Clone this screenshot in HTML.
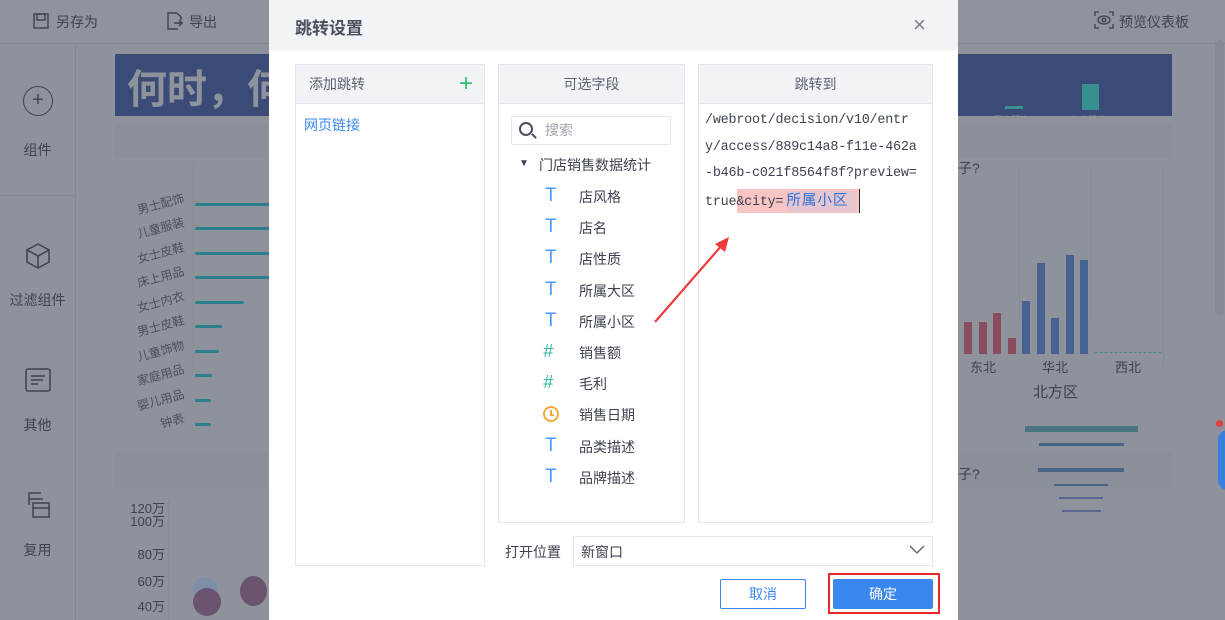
<!DOCTYPE html>
<html><head><meta charset="utf-8"><style>
*{margin:0;padding:0;box-sizing:border-box}
body{width:1225px;height:620px;overflow:hidden;background:#8e929b;font-family:"Liberation Sans","Noto Sans CJK SC",sans-serif;position:relative;color:#3c4250}
.a{position:absolute}
.bgt{color:#3e4350;font-size:14px}
.side{color:#3e4350;font-size:14px;width:75px;text-align:center}
.blbl{font-size:12px;color:#4a4f5c;text-align:right;width:70px;transform:rotate(-15deg)}
.bar{height:3px;background:#2b7f8c;border-radius:2px}
.dlg{left:269px;top:0;width:689px;height:620px;background:#fff}
.panel{border:1px solid #e3e6eb;background:#fff}
.ph{height:39px;background:#f1f3f6;border-bottom:1px solid #e3e6eb;font-size:14px;color:#5c6270;line-height:39px}
.T{left:46px;color:#4a9aff;font-size:19px;font-family:"Liberation Sans",sans-serif}
.H{left:44px;color:#2fb8a2;font-size:18px;font-style:italic}
.url{font-family:"Liberation Mono","DejaVu Sans Mono",monospace;font-size:13.4px;color:#3c4250;line-height:26.5px;letter-spacing:-0.2px}
</style></head><body>
<!-- background app -->
<div class="a" style="left:0;top:0;width:1225px;height:44px;background:#8f939c;border-bottom:1px solid #80858f"></div>
<svg class="a" style="left:32px;top:12px" width="18" height="18"><rect x="2" y="2" width="14" height="14" fill="none" stroke="#3e4350" stroke-width="1.4"/><rect x="5" y="2" width="8" height="6" fill="none" stroke="#3e4350" stroke-width="1.4"/></svg>
<div class="a bgt" style="left:56px;top:12px">另存为</div>
<svg class="a" style="left:165px;top:11px" width="18" height="20"><path d="M12 2H3v16h10M12 2l4 4v3M9 12h8M14 9l3 3-3 3" fill="none" stroke="#3e4350" stroke-width="1.4"/></svg>
<div class="a bgt" style="left:189px;top:12px">导出</div>
<svg class="a" style="left:1094px;top:11px" width="20" height="18"><path d="M1 5V1h4M15 1h4v4M19 13v4h-4M5 17H1v-4" fill="none" stroke="#3e4350" stroke-width="1.3"/><ellipse cx="10" cy="9" rx="6" ry="4" fill="none" stroke="#3e4350" stroke-width="1.3"/><circle cx="10" cy="9" r="1.8" fill="none" stroke="#3e4350" stroke-width="1.3"/></svg>
<div class="a bgt" style="left:1119px;top:12px">预览仪表板</div>
<div class="a" style="left:75px;top:44px;width:1px;height:576px;background:#828791"></div>
<div class="a" style="left:0;top:195px;width:75px;height:1px;background:#828791"></div>
<div class="a" style="left:23px;top:86px;width:30px;height:30px;border:1.5px solid #3e4350;border-radius:50%;text-align:center;line-height:26px;font-size:20px;color:#3e4350">+</div>
<div class="a side" style="left:0;top:140px">组件</div>
<svg class="a" style="left:24px;top:242px" width="28" height="28"><path d="M14 2L25 8v12L14 26 3 20V8z M3 8l11 6 11-6 M14 14v12" fill="none" stroke="#3e4350" stroke-width="1.5"/></svg>
<div class="a side" style="left:0;top:290px">过滤组件</div>
<svg class="a" style="left:25px;top:368px" width="26" height="24"><rect x="1" y="1" width="24" height="22" rx="2" fill="none" stroke="#3e4350" stroke-width="1.5"/><path d="M6 8h14M6 12h12M6 16h7" stroke="#3e4350" stroke-width="1.5"/></svg>
<div class="a side" style="left:0;top:415px">其他</div>
<svg class="a" style="left:25px;top:491px" width="26" height="28"><path d="M4 14V2h12M4 8h14" fill="none" stroke="#3e4350" stroke-width="1.5"/><rect x="8" y="12" width="16" height="14" fill="none" stroke="#3e4350" stroke-width="1.5"/><path d="M8 17h16" stroke="#3e4350" stroke-width="1.5"/></svg>
<div class="a side" style="left:0;top:540px">复用</div>
<div class="a" style="left:115px;top:54px;width:1057px;height:62px;background:#394b76"></div>
<div class="a" style="left:127px;top:66px;font-size:40px;font-weight:bold;color:#8e929b;line-height:48px">何时，何</div>
<div class="a" style="left:128px;top:121px;font-size:14px;color:#8e929b;line-height:14px;height:16px;overflow:hidden">儿童服饰？女士服饰？</div>
<div class="a" style="left:1005px;top:106px;width:18px;height:3px;background:#3a8f8f"></div>
<div class="a" style="left:1082px;top:84px;width:17px;height:26px;background:#3a8f8f"></div>
<div class="a" style="left:993px;top:113px;font-size:9px;color:#8e929b">男士服饰</div>
<div class="a" style="left:1070px;top:113px;font-size:9px;color:#8e929b">儿童服装</div>
<div class="a" style="left:115px;top:123px;width:1057px;height:35px;background:#8a8f99"></div>
<div class="a" style="left:958px;top:158px;font-size:14px">子?</div>
<div class="a" style="left:115px;top:453px;width:1057px;height:35px;background:#8a8f99"></div>
<div class="a" style="left:958px;top:464px;font-size:14px">子?</div>
<div class="a" style="left:193px;top:162px;width:1px;height:206px;background:#868b94"></div>
<div class="a blbl" style="left:115px;top:198px">男士配饰</div><div class="a bar" style="left:195px;top:203px;width:80px"></div>
<div class="a blbl" style="left:115px;top:222px">儿童服装</div><div class="a bar" style="left:195px;top:227px;width:80px"></div>
<div class="a blbl" style="left:115px;top:247px">女士皮鞋</div><div class="a bar" style="left:195px;top:252px;width:80px"></div>
<div class="a blbl" style="left:115px;top:271px">床上用品</div><div class="a bar" style="left:195px;top:276px;width:80px"></div>
<div class="a blbl" style="left:115px;top:296px">女士内衣</div><div class="a bar" style="left:195px;top:301px;width:49px"></div>
<div class="a blbl" style="left:115px;top:320px">男士皮鞋</div><div class="a bar" style="left:195px;top:325px;width:27px"></div>
<div class="a blbl" style="left:115px;top:345px">儿童饰物</div><div class="a bar" style="left:195px;top:350px;width:24px"></div>
<div class="a blbl" style="left:115px;top:369px">家庭用品</div><div class="a bar" style="left:195px;top:374px;width:17px"></div>
<div class="a blbl" style="left:115px;top:394px">婴儿用品</div><div class="a bar" style="left:195px;top:399px;width:16px"></div>
<div class="a blbl" style="left:115px;top:418px">钟表</div><div class="a bar" style="left:195px;top:423px;width:16px"></div>
<div class="a" style="left:168px;top:500px;width:1px;height:120px;background:#868b94"></div>
<div class="a" style="left:125px;top:502px;font-size:13px;line-height:13px;text-align:right;width:40px">120万<br>100万</div>
<div class="a" style="left:125px;top:544px;font-size:13px;text-align:right;width:40px">80万</div>
<div class="a" style="left:125px;top:571px;font-size:13px;text-align:right;width:40px">60万</div>
<div class="a" style="left:125px;top:596px;font-size:13px;text-align:right;width:40px">40万</div>
<div class="a" style="left:192px;top:577px;width:26px;height:26px;border-radius:50%;background:#7f8fa8"></div>
<div class="a" style="left:193px;top:588px;width:28px;height:28px;border-radius:50%;background:#6b5470"></div>
<div class="a" style="left:240px;top:576px;width:27px;height:30px;border-radius:50%;background:#6b5470"></div>
<!-- right chart -->
<div class="a" style="left:1019px;top:162px;width:1px;height:158px;background:#868b94"></div>
<div class="a" style="left:1091px;top:162px;width:1px;height:158px;background:#868b94"></div>
<div class="a" style="left:1163px;top:162px;width:1px;height:206px;background:#868b94"></div>
<div class="a" style="left:964px;top:322px;width:8px;height:32px;background:#8a4d5f"></div>
<div class="a" style="left:979px;top:322px;width:8px;height:32px;background:#8a4d5f"></div>
<div class="a" style="left:993px;top:313px;width:8px;height:41px;background:#8a4d5f"></div>
<div class="a" style="left:1008px;top:338px;width:8px;height:16px;background:#8a4d5f"></div>
<div class="a" style="left:1022px;top:301px;width:8px;height:53px;background:#46638f"></div>
<div class="a" style="left:1037px;top:263px;width:8px;height:91px;background:#46638f"></div>
<div class="a" style="left:1051px;top:318px;width:8px;height:36px;background:#46638f"></div>
<div class="a" style="left:1066px;top:255px;width:8px;height:99px;background:#46638f"></div>
<div class="a" style="left:1080px;top:260px;width:8px;height:94px;background:#46638f"></div>
<div class="a" style="left:1095px;top:352px;width:66px;height:1px;border-top:1px dashed #4a8888"></div>
<div class="a" style="left:970px;top:357px;font-size:13px">东北</div>
<div class="a" style="left:1042px;top:357px;font-size:13px">华北</div>
<div class="a" style="left:1115px;top:357px;font-size:13px">西北</div>
<div class="a" style="left:1033px;top:381px;font-size:15px">北方区</div>
<div class="a" style="left:1025px;top:426px;width:113px;height:6px;background:#4a7480"></div>
<div class="a" style="left:1039px;top:443px;width:85px;height:3px;background:#4a6485"></div>
<div class="a" style="left:1038px;top:468px;width:86px;height:4px;background:#4a6485"></div>
<div class="a" style="left:1054px;top:484px;width:54px;height:2px;background:#4a6485"></div>
<div class="a" style="left:1059px;top:497px;width:44px;height:2px;background:#5a6490"></div>
<div class="a" style="left:1062px;top:510px;width:39px;height:2px;background:#5a6490"></div>
<div class="a" style="left:1215px;top:40px;width:9px;height:275px;background:#858a93;border-radius:4px"></div>
<div class="a" style="left:1218px;top:430px;width:20px;height:60px;background:#3a7fe0;border-radius:10px"></div>
<div class="a" style="left:1216px;top:420px;width:7px;height:7px;background:#e04040;border-radius:50%"></div>

<!-- dialog -->
<div class="a dlg">
 <div class="a" style="left:0;top:0;width:689px;height:50px;background:#f1f3f6"></div>
 <div class="a" style="left:26px;top:14px;font-size:17px;font-weight:bold;color:#4a505d">跳转设置</div>
 <div class="a" style="left:644px;top:12px;font-size:22px;color:#7a7f8a;font-weight:300">×</div>

 <div class="a panel" style="left:26px;top:64px;width:190px;height:502px">
  <div class="ph" style="padding-left:13px">添加跳转</div>
  <div class="a" style="left:163px;top:4px;font-size:24px;color:#2fc06a;line-height:30px">+</div>
  <div class="a" style="left:8px;top:50px;font-size:14px;color:#3a87f0">网页链接</div>
 </div>

 <div class="a panel" style="left:229px;top:64px;width:187px;height:459px">
  <div class="ph" style="text-align:center">可选字段</div>
  <div class="a" style="left:12px;top:51px;width:160px;height:29px;border:1px solid #e3e6eb;border-radius:2px"></div>
  <div class="a" style="left:20px;top:57px;width:14px;height:14px;border:2px solid #4a505d;border-radius:50%"></div>
  <div class="a" style="left:32px;top:70px;width:6px;height:2px;background:#4a505d;transform:rotate(45deg)"></div>
  <div class="a" style="left:46px;top:55px;font-size:14px;color:#a0a5ae">搜索</div>
  <div class="a" style="left:20px;top:93px;font-size:10px;color:#3c4250">▼</div>
  <div class="a" style="left:40px;top:90px;font-size:14px">门店销售数据统计</div>
  <div class="a T" style="top:120px">T</div><div class="a" style="left:80px;top:122px;font-size:14px">店风格</div>
  <div class="a T" style="top:151px">T</div><div class="a" style="left:80px;top:153px;font-size:14px">店名</div>
  <div class="a T" style="top:182px">T</div><div class="a" style="left:80px;top:184px;font-size:14px">店性质</div>
  <div class="a T" style="top:214px">T</div><div class="a" style="left:80px;top:216px;font-size:14px">所属大区</div>
  <div class="a T" style="top:245px">T</div><div class="a" style="left:80px;top:247px;font-size:14px">所属小区</div>
  <div class="a H" style="top:276px">#</div><div class="a" style="left:80px;top:278px;font-size:14px">销售额</div>
  <div class="a H" style="top:307px">#</div><div class="a" style="left:80px;top:309px;font-size:14px">毛利</div>
  <div class="a" style="left:44px;top:341px;width:16px;height:16px;border:2px solid #f5a83a;border-radius:50%"></div>
  <div class="a" style="left:51px;top:345px;width:2px;height:5px;background:#f5a83a"></div>
  <div class="a" style="left:51px;top:349px;width:4px;height:2px;background:#f5a83a"></div>
  <div class="a" style="left:80px;top:340px;font-size:14px">销售日期</div>
  <div class="a T" style="top:370px">T</div><div class="a" style="left:80px;top:372px;font-size:14px">品类描述</div>
  <div class="a T" style="top:401px">T</div><div class="a" style="left:80px;top:403px;font-size:14px">品牌描述</div>
 </div>

 <div class="a panel" style="left:429px;top:64px;width:235px;height:459px">
  <div class="ph" style="text-align:center">跳转到</div>
  <div class="a" style="left:38px;top:124px;width:122px;height:24px;background:#f9c4c4"></div>
  <div class="a" style="left:89px;top:126px;width:68px;height:21px;background:#e5c6d0;border-radius:3px"></div>
  <div class="a" style="left:160px;top:124px;width:1px;height:24px;background:#222"></div>
  <div class="a url" style="left:6px;top:43px;width:228px">/webroot/decision/v10/entr<br>y/access/889c14a8-f11e-462a<br>-b46b-c021f8564f8f?preview=<br>true&amp;city=<span style="font-family:'Liberation Sans','Noto Sans CJK SC',sans-serif;color:#2f6fd6;font-size:14.5px;letter-spacing:1px;margin-left:3px">所属小区</span></div>
 </div>

 <svg class="a" style="left:380px;top:230px" width="90" height="100"><line x1="6" y1="92" x2="74" y2="14" stroke="#ee3b3b" stroke-width="2.2"/><polygon points="80,7 66,14 76,22" fill="#ee3b3b"/></svg>

 <div class="a" style="left:236px;top:542px;font-size:14px">打开位置</div>
 <div class="a" style="left:304px;top:536px;width:360px;height:30px;border:1px solid #e3e6eb"></div>
 <div class="a" style="left:312px;top:542px;font-size:14px">新窗口</div>
 <svg class="a" style="left:640px;top:545px" width="16" height="10"><polyline points="1,1 8,8 15,1" fill="none" stroke="#5a606c" stroke-width="1.3"/></svg>

 <div class="a" style="left:451px;top:579px;width:86px;height:30px;border:1px solid #3a87f0;border-radius:2px;color:#3a87f0;font-size:14px;text-align:center;line-height:28px">取消</div>
 <div class="a" style="left:559px;top:573px;width:112px;height:41px;border:2px solid #e8262c"></div>
 <div class="a" style="left:564px;top:579px;width:100px;height:30px;background:#3a87f0;border-radius:2px;color:#fff;font-size:14px;text-align:center;line-height:30px">确定</div>
</div>
</body></html>
